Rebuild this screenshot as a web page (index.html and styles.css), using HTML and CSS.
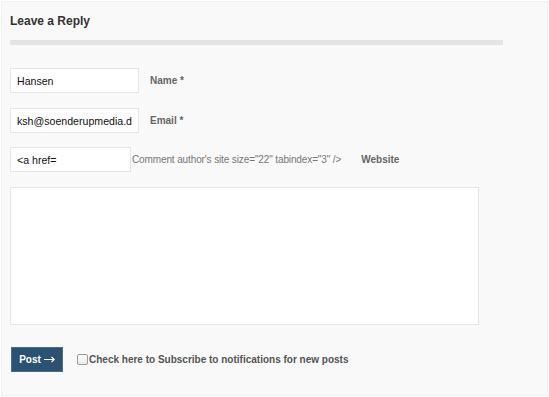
FILE: index.html
```html
<!DOCTYPE html>
<html>
<head>
<meta charset="utf-8">
<link rel="stylesheet" href="styles.css">
</head>
<body>
<div class="panel">
  <h3 class="title">Leave a Reply</h3>
  <div class="bar"></div>
  <form class="form">
    <div class="row row-name">
      <input class="field field-wide" type="text" value="Hansen">
      <label class="label">Name *</label>
    </div>
    <div class="row row-email">
      <input class="field field-wide" type="text" value="ksh@soenderupmedia.dk">
      <label class="label">Email *</label>
    </div>
    <div class="row row-site">
      <input class="field field-narrow" type="text" value="&lt;a href=">
      <span class="stray">Comment author's site size="22" tabindex="3" /&gt;</span>
      <label class="label label-site">Website</label>
    </div>
    <textarea class="comment"></textarea>
    <div class="row row-submit">
      <button class="post" type="button">Post<svg class="arrow" width="11" height="7" viewBox="0 0 11 7"><path d="M0 3.5H10M7.5 1L10.2 3.5L7.5 6" fill="none" stroke="#ffffff" stroke-width="1.2"/></svg></button>
      <input class="check" type="checkbox">
      <span class="sub">Check here to Subscribe to notifications for new posts</span>
    </div>
  </form>
</div>
</body>
</html>
```
FILE: styles.css
```css
html, body {
  margin: 0;
  padding: 0;
  background: #ffffff;
}
body {
  font-family: "Liberation Sans", Arial, sans-serif;
}
.panel {
  box-sizing: border-box;
  margin: 1px;
  width: 547px;
  height: 395px;
  background: #f9f9f9;
  border: 1px solid #f1f1f1;
  padding: 12px 8px 0 8px;
}
.title {
  margin: 0;
  font-size: 12px;
  line-height: 14px;
  font-weight: bold;
  color: #333333;
}
.bar {
  margin-top: 12px;
  width: 493px;
  height: 5px;
  background: #e4e4e4;
}
.form {
  margin: 0;
  display: flex;
  flex-direction: column;
}
.row {
  display: flex;
  align-items: center;
}
.row-name { margin-top: 23px; }
.row-email { margin-top: 15px; }
.row-site { margin-top: 14px; }
.field {
  box-sizing: border-box;
  height: 25px;
  margin: 0;
  background: #ffffff;
  border: 1px solid #e6e6e6;
  padding: 0 6px;
  font-family: "Liberation Sans", Arial, sans-serif;
  font-size: 10.6px;
  color: #111111;
  outline: none;
}
.field-wide { width: 129px; }
.field-narrow { width: 121px; }
.label {
  font-size: 10px;
  font-weight: bold;
  color: #666666;
  margin-left: 11px;
}
.stray {
  font-size: 10px;
  color: #777777;
  margin-left: 1px;
  letter-spacing: -0.12px;
}
.label-site {
  margin-left: 20px;
}
.comment {
  box-sizing: border-box;
  margin: 15px 0 0 0;
  width: 469px;
  height: 138px;
  background: #ffffff;
  border: 1px solid #e6e6e6;
  resize: none;
  outline: none;
  display: block;
}
.row-submit { margin-top: 22px; }
.post {
  box-sizing: border-box;
  margin: 0 0 0 1px;
  width: 52px;
  height: 25px;
  padding: 0 0 1px 0;
  background: #2b5272;
  border: 1px solid #4a6d88;
  color: #ffffff;
  font-family: "Liberation Sans", Arial, sans-serif;
  font-size: 10px;
  font-weight: bold;
  display: flex;
  align-items: center;
  justify-content: center;
}
.arrow {
  margin-left: 3px;
  margin-top: 1px;
}
.check {
  appearance: none;
  -webkit-appearance: none;
  box-sizing: border-box;
  width: 11px;
  height: 11px;
  margin: 0 1px 0 14px;
  border: 1px solid #9a9a9a;
  border-radius: 2px;
  background: linear-gradient(#ffffff, #e9e9e9);
}
.sub {
  font-size: 10px;
  font-weight: bold;
  color: #555555;
}
```
